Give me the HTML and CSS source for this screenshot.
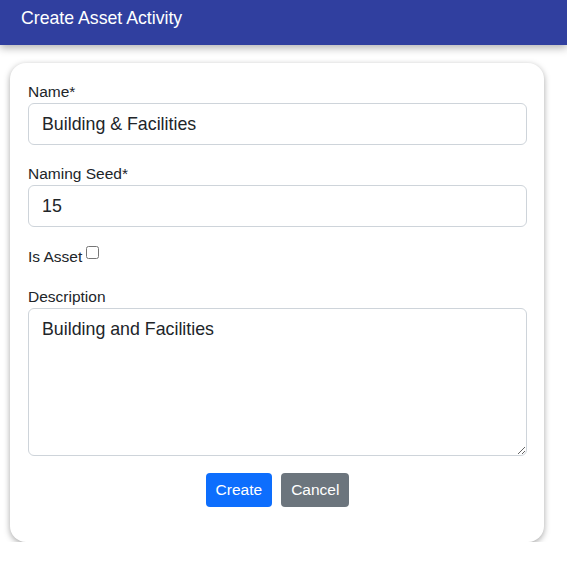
FILE: index.html
```html
<!DOCTYPE html>
<html>
<head>
<meta charset="utf-8">
<link rel="stylesheet" href="styles.css">
</head>
<body>
<header class="topbar">
  <h1 class="title">Create Asset Activity</h1>
</header>
<main class="page">
  <form class="card">
    <div class="field">
      <label class="label">Name*</label>
      <input class="control" type="text" value="Building &amp; Facilities">
    </div>
    <div class="field">
      <label class="label">Naming Seed*</label>
      <input class="control" type="text" value="15">
    </div>
    <div class="field check-field">
      <label class="label inline">Is Asset</label>
      <input class="checkbox" type="checkbox">
    </div>
    <div class="field">
      <label class="label">Description</label>
      <textarea class="control area">Building and Facilities</textarea>
    </div>
    <div class="actions">
      <button type="button" class="btn primary">Create</button>
      <button type="button" class="btn secondary">Cancel</button>
    </div>
  </form>
</main>
</body>
</html>
```

FILE: styles.css
```css
* { box-sizing: border-box; }
html, body { margin: 0; padding: 0; background: #ffffff; }
body { font-family: "Liberation Sans", Arial, sans-serif; color: #212529; }

.topbar {
  height: 45px;
  background: #303f9f;
  box-shadow: 0 3px 8px rgba(0,0,0,0.3);
  padding: 0 21px;
  display: flex;
  align-items: flex-start;
  position: relative;
  z-index: 1;
}
.title {
  margin: 0;
  padding-top: 7px;
  font-size: 17.7px;
  font-weight: normal;
  color: #ffffff;
  line-height: 22px;
}

.page { padding: 18px 23px 0 10px; }

.card {
  width: 534px;
  background: #fff;
  border-radius: 16px;
  box-shadow: 0 2px 6px rgba(0,0,0,0.35);
  padding: 17px 17px 35px 18px;
  display: flex;
  flex-direction: column;
}

.field { display: flex; flex-direction: column; margin-bottom: 17px; }
.label { font-size: 15.5px; line-height: 21px; padding-top: 1px; margin-bottom: 1px; color: #212529; }

.control {
  width: 499px;
  height: 42px;
  border: 1px solid #ced4da;
  border-radius: 6px;
  padding: 6px 13px;
  font-family: "Liberation Sans", Arial, sans-serif;
  font-size: 17.8px;
  color: #212529;
  background: #fff;
  outline: none;
}
.area { height: 148px; resize: vertical; line-height: 27px; padding-top: 7px; }

.check-field { flex-direction: row; align-items: center; margin-bottom: 19px; height: 22px; padding-top: 2px; }
.label.inline { margin: 0; padding-top: 0; }
.checkbox { width: 13px; height: 13px; margin: -7px 0 0 4px; }

.actions { display: flex; justify-content: center; gap: 9px; padding-top: 0; margin-top: 0; }
.btn {
  height: 34px;
  border: none;
  border-radius: 4px;
  padding: 0 10px;
  font-family: "Liberation Sans", Arial, sans-serif;
  font-size: 15.5px;
  color: #fff;
}
.primary { background: #0d6efd; }
.secondary { background: #6c757d; }
```
